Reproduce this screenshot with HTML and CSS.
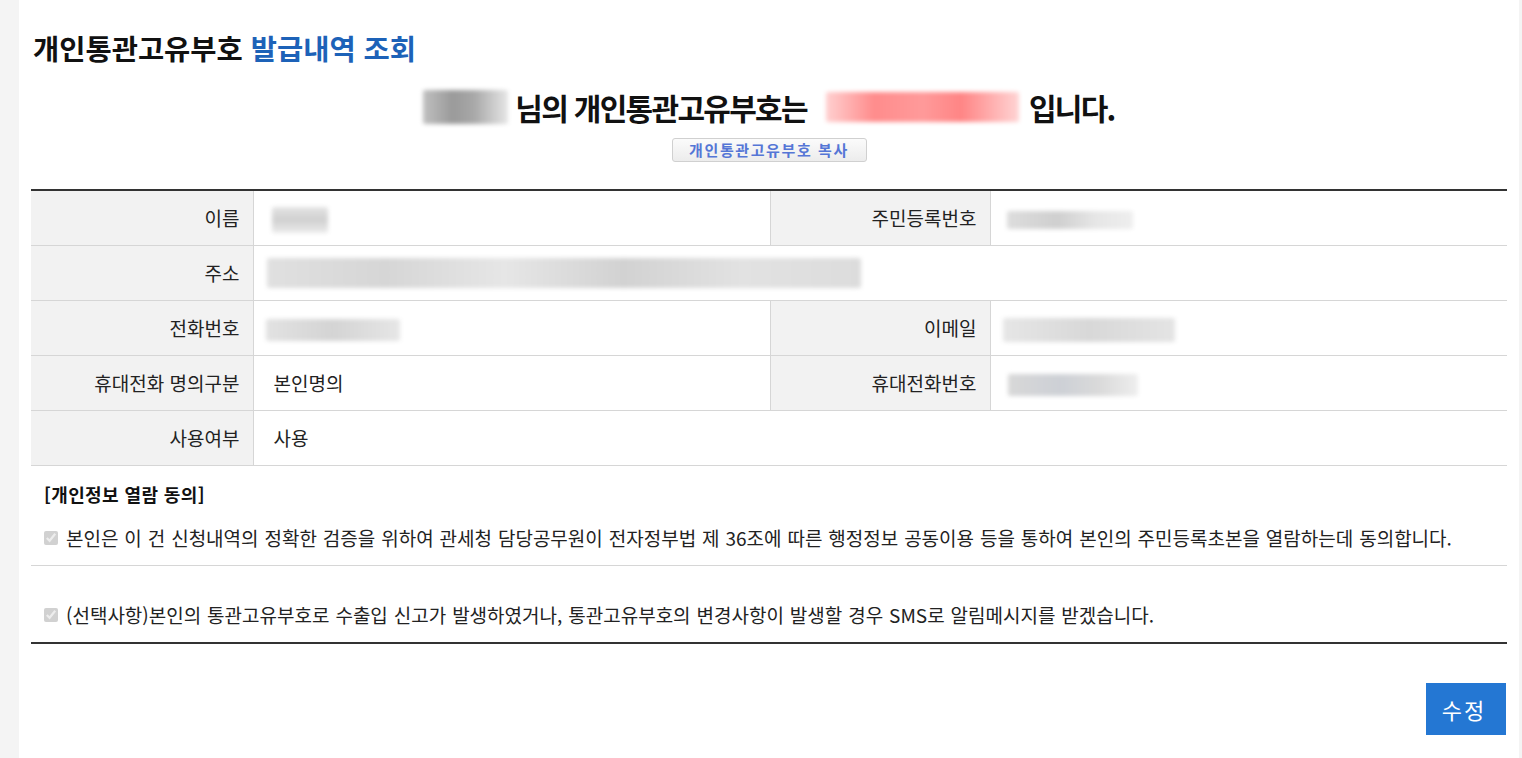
FILE: index.html
```html
<!DOCTYPE html>
<html lang="ko">
<head>
<meta charset="utf-8">
<title>개인통관고유부호 발급내역 조회</title>
<link rel="stylesheet" href="styles.css">
</head>
<body>
<div class="page">
  <h1 class="title">개인통관고유부호 <span class="title-accent">발급내역 조회</span></h1>

  <div class="headline">
    <span class="blur blur-head-name"></span>
    <span class="headline-text">님의 개인통관고유부호는</span>
    <span class="blur blur-code"></span>
    <span class="headline-text">입니다.</span>
  </div>
  <div class="copy-wrap">
    <button class="copy-btn" type="button">개인통관고유부호 복사</button>
  </div>

  <table class="info">
    <colgroup>
      <col class="c-th1"><col class="c-td1"><col class="c-th2"><col class="c-td2">
    </colgroup>
    <tr>
      <th>이름</th>
      <td><span class="blur blur-name"></span></td>
      <th>주민등록번호</th>
      <td><span class="blur blur-jumin"></span></td>
    </tr>
    <tr>
      <th>주소</th>
      <td colspan="3"><span class="blur blur-addr"></span></td>
    </tr>
    <tr>
      <th>전화번호</th>
      <td><span class="blur blur-phone"></span></td>
      <th>이메일</th>
      <td><span class="blur blur-email"></span></td>
    </tr>
    <tr>
      <th>휴대전화 명의구분</th>
      <td>본인명의</td>
      <th>휴대전화번호</th>
      <td><span class="blur blur-mobile"></span></td>
    </tr>
    <tr>
      <th>사용여부</th>
      <td colspan="3">사용</td>
    </tr>
  </table>

  <div class="consent">
    <div class="consent-title">[개인정보 열람 동의]</div>
    <label class="consent-row">
      <input type="checkbox" checked disabled>
      <span>본인은 이 건 신청내역의 정확한 검증을 위하여 관세청 담당공무원이 전자정부법 제 36조에 따른 행정정보 공동이용 등을 통하여 본인의 주민등록초본을 열람하는데 동의합니다.</span>
    </label>
    <div class="consent-sep"></div>
    <label class="consent-row consent-row-2">
      <input type="checkbox" checked disabled>
      <span>(선택사항)본인의 통관고유부호로 수출입 신고가 발생하였거나, 통관고유부호의 변경사항이 발생할 경우 SMS로 알림메시지를 받겠습니다.</span>
    </label>
  </div>

  <div class="actions">
    <button class="edit-btn" type="button">수정</button>
  </div>
</div>
</body>
</html>
```

FILE: styles.css
```css
* { box-sizing: border-box; }

html, body {
  margin: 0;
  padding: 0;
  background: #f4f4f4;
  font-family: "Noto Sans CJK KR", "Noto Sans", sans-serif;
  color: #222;
}

.page {
  margin-left: 19px;
  width: 1500px;
  min-height: 758px;
  background: #fff;
  padding: 29px 12px 0 12px;
}

.title {
  margin: 0 0 0 2px;
  font-size: 28.5px;
  line-height: 38px;
  font-weight: 700;
  color: #111;
  letter-spacing: 0;
}

.title-accent { color: #1d62b8; }

.headline {
  margin-top: 20px;
  display: flex;
  justify-content: center;
  align-items: center;
  height: 40px;
}

.headline-text {
  font-size: 30px;
  font-weight: 700;
  color: #111;
  letter-spacing: -1.7px;
  white-space: nowrap;
}

.blur {
  display: inline-block;
  vertical-align: middle;
  filter: blur(2px);
  border-radius: 2px;
}

.blur-head-name {
  width: 85px;
  height: 34px;
  margin-right: 7px;
  background: linear-gradient(90deg, #c0c0c0, #9a9a9a 35%, #a8a8a8 60%, #cfcfcf 85%, #e6e6e6);
}

.blur-code {
  width: 193px;
  height: 30px;
  margin: 0 10px 0 19px;
  background: linear-gradient(90deg, #ffd0d0, #ff8c8c 25%, #ff9a9a 50%, #ff8585 70%, #ffd4d4);
}

.copy-wrap {
  display: flex;
  justify-content: center;
  margin-top: 11px;
}

.copy-btn {
  width: 195px;
  height: 24px;
  padding: 0;
  border: 1px solid #d0d0d0;
  border-radius: 3px;
  background: linear-gradient(#fbfbfb, #ececec);
  color: #5576d6;
  font-family: inherit;
  font-size: 15px;
  line-height: 22px;
  font-weight: 700;
  letter-spacing: 1.6px;
  white-space: nowrap;
}

.info {
  width: 100%;
  margin-top: 27px;
  border-collapse: collapse;
  border-top: 2px solid #333;
  font-size: 19px;
}

.c-th1 { width: 222px; }
.c-td1 { width: 517px; }
.c-th2 { width: 220px; }

.info th, .info td {
  height: 55px;
  border-bottom: 1px solid #d6d6d6;
  padding: 0;
}

.info th {
  background: #f2f2f2;
  font-weight: 400;
  text-align: right;
  padding-right: 13px;
  color: #222;
  border-right: 1px solid #d6d6d6;
  white-space: nowrap;
}

.info td {
  padding-left: 20px;
  color: #222;
}

.info td + th { border-left: 1px solid #d6d6d6; }

.blur-name {
  width: 56px; height: 26px; margin-left: -2px;
  background: linear-gradient(180deg, #e4e4e4, #d0d0d0 50%, #ececec);
}
.blur-jumin {
  width: 126px; height: 18px; margin-left: -4px; margin-bottom: 2px;
  background: linear-gradient(90deg, #dddddd, #cfcfcf 40%, #e6e6e6 70%, #eeeeee);
}
.blur-addr {
  width: 594px; height: 30px; margin-left: -7px;
  background: linear-gradient(90deg, #e0e0e0, #d6d6d6 20%, #e6e6e6 40%, #d2d2d2 60%, #e2e2e2 80%, #dcdcdc);
}
.blur-phone {
  width: 134px; height: 22px; margin-left: -8px;
  background: linear-gradient(90deg, #e2e2e2, #d4d4d4 50%, #e6e6e6);
}
.blur-email {
  width: 172px; height: 24px; margin-left: -8px;
  background: linear-gradient(90deg, #e6e6e6, #d8d8d8 50%, #e4e4e4);
}
.blur-mobile {
  width: 130px; height: 22px; margin-left: -3px;
  background: linear-gradient(90deg, #d8d8d8, #cdd0d6 40%, #dadada 70%, #eeeeee);
}

.consent {
  border-bottom: 2px solid #333;
}

.consent-title {
  padding: 18px 0 0 13px;
  font-size: 18px;
  line-height: 20px;
  font-weight: 700;
  color: #111;
  letter-spacing: 0.4px;
}

.consent-row {
  display: flex;
  align-items: center;
  padding: 21px 0 14px 13px;
  font-size: 19px;
  line-height: 26px;
  color: #222;
  white-space: nowrap;
  word-spacing: 0.6px;
}

.consent-row input {
  width: 14px;
  height: 14px;
  margin: 0 8px 0 0;
}

.consent-row-2 {
  padding: 36px 0 14px 13px;
}

.consent-sep {
  height: 1px;
  background: #d6d6d6;
}

.actions {
  display: flex;
  justify-content: flex-end;
  padding-top: 39px;
}

.edit-btn {
  width: 80px;
  height: 52px;
  margin-right: 1px;
  border: none;
  background: #2477d3;
  color: #fff;
  font-family: inherit;
  font-size: 22px;
  letter-spacing: 2px;
  padding-left: 2px;
}
```
